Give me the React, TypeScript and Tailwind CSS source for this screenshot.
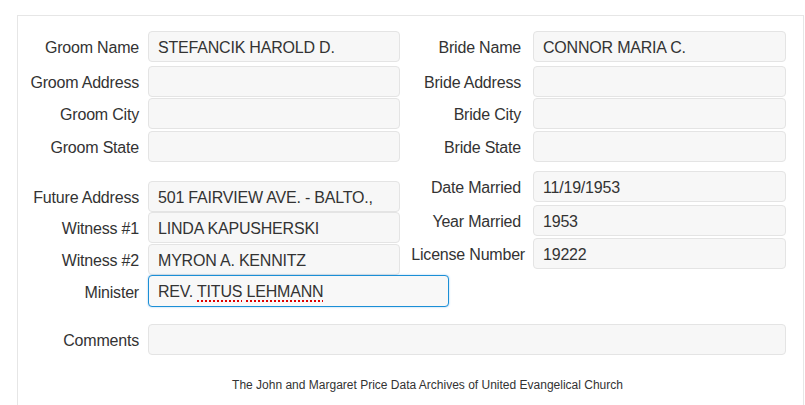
import React from "react";

type FieldProps = {
  label: string;
  value?: React.ReactNode;
  labelW: number;
  gapCls: string;
  inputCls: string;
  rowCls?: string;
  labelCls?: string;
  focused?: boolean;
};

function Field({ label, value, gapCls, inputCls, rowCls = "", labelCls = "", focused = false, labelW }: FieldProps) {
  return (
    <div className={`flex items-center ${rowCls}`}>
      <div
        className={`shrink-0 text-right whitespace-nowrap pt-[3px] ${labelCls}`}
        style={{ width: labelW }}
      >
        {label}
      </div>
      <div
        className={`${gapCls} ${inputCls} shrink-0 flex items-center pl-[9px] pt-[2px] rounded-[4px] border whitespace-nowrap ${
          focused
            ? "bg-[#f8f8f8] border-[#1b8fd6] shadow-[0_0_2px_rgba(80,160,230,0.6)]"
            : "bg-[#f7f7f7] border-[#e4e4e4]"
        }`}
      >
        {value}
      </div>
    </div>
  );
}

const spell = "underline decoration-dotted decoration-[#e00000] decoration-[1.5px] underline-offset-[3px]";

export default function App() {
  return (
    <div
      className="w-[805px] h-[405px] overflow-hidden bg-white text-[#333333] text-[16px] tracking-[-0.2px]"
      style={{ fontFamily: '"Liberation Sans", Arial, sans-serif' }}
    >
      <div className="ml-[17px] mt-[15px] w-[787px] h-[400px] border border-b-0 border-[#e6e6e6]">
        {/* Section 1 */}
        <div className="flex pt-[15px]">
          <div className="w-[382px] shrink-0 flex flex-col">
            <Field label="Groom Name" value="STEFANCIK HAROLD D." labelW={121} gapCls="ml-[9px]" inputCls="w-[252px] h-[31px]" />
            <Field label="Groom Address" labelW={121} gapCls="ml-[9px]" inputCls="w-[252px] h-[31px]" rowCls="mt-[4px]" />
            <Field label="Groom City" labelW={121} gapCls="ml-[9px]" inputCls="w-[252px] h-[31px]" rowCls="mt-[1px]" />
            <Field label="Groom State" labelW={121} gapCls="ml-[9px]" inputCls="w-[252px] h-[31px]" rowCls="mt-[2px]" />
          </div>
          <div className="flex flex-col">
            <Field label="Bride Name" value="CONNOR MARIA C." labelW={121} gapCls="ml-[12px]" inputCls="w-[253px] h-[31px]" />
            <Field label="Bride Address" labelW={121} gapCls="ml-[12px]" inputCls="w-[253px] h-[31px]" rowCls="mt-[4px]" />
            <Field label="Bride City" labelW={121} gapCls="ml-[12px]" inputCls="w-[253px] h-[31px]" rowCls="mt-[1px]" />
            <Field label="Bride State" labelW={121} gapCls="ml-[12px]" inputCls="w-[253px] h-[31px]" rowCls="mt-[2px]" />
          </div>
        </div>

        {/* Section 2 */}
        <div className="flex items-start mt-[9px]">
          <div className="w-[382px] shrink-0 flex flex-col pt-[10px]">
            <Field label="Future Address" value="501 FAIRVIEW AVE. - BALTO.," labelW={121} gapCls="ml-[9px]" inputCls="w-[252px] h-[31px]" />
            <Field label="Witness #1" value="LINDA KAPUSHERSKI" labelW={121} gapCls="ml-[9px]" inputCls="w-[252px] h-[31px]" />
            <Field label="Witness #2" value="MYRON A. KENNITZ" labelW={121} gapCls="ml-[9px]" inputCls="w-[252px] h-[31px]" rowCls="mt-[1px]" />
            <Field
              label="Minister"
              value={
                <span>
                  REV. <span className={spell}>TITUS</span> <span className={spell}>LEHMANN</span>
                </span>
              }
              labelW={121}
              gapCls="ml-[9px]"
              inputCls="w-[301px] h-[32px]"
              focused
            />
          </div>
          <div className="flex flex-col">
            <Field label="Date Married" value="11/19/1953" labelW={121} gapCls="ml-[12px]" inputCls="w-[253px] h-[31px]" />
            <Field label="Year Married" value="1953" labelW={121} gapCls="ml-[12px]" inputCls="w-[253px] h-[31px]" rowCls="mt-[3px]" />
            <Field label="License Number" value="19222" labelW={125} gapCls="ml-[8px]" inputCls="w-[253px] h-[31px]" rowCls="mt-[2px]" />
          </div>
        </div>

        {/* Comments */}
        <Field label="Comments" labelW={121} gapCls="ml-[9px]" inputCls="w-[638px] h-[31px]" rowCls="mt-[17px]" />

        {/* Footer */}
        <div className="mt-[22px] pl-[34px] text-center text-[12px] leading-[16px] tracking-normal">
          The John and Margaret Price Data Archives of United Evangelical Church
        </div>
      </div>
    </div>
  );
}
